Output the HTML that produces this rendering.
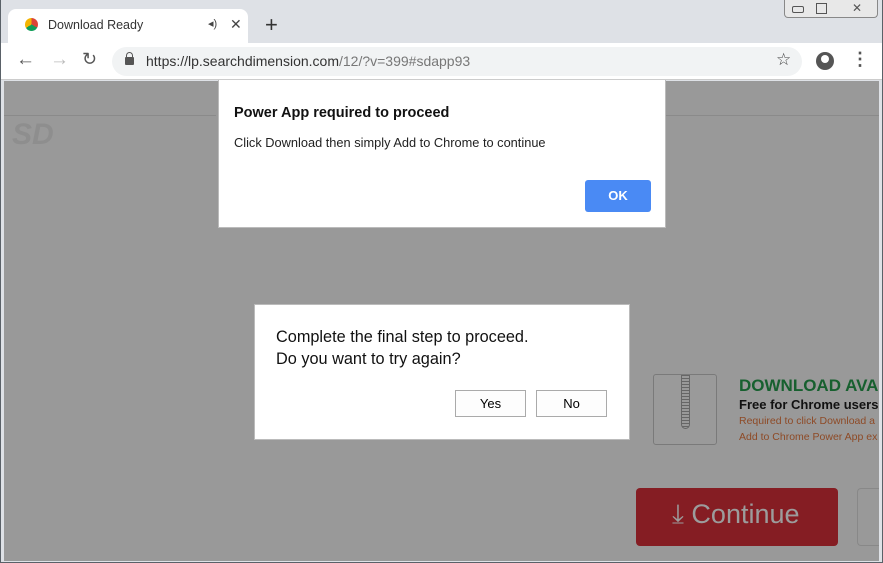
<!DOCTYPE html>
<html><head><style>
*{box-sizing:border-box;margin:0;padding:0}
body{width:883px;height:563px;overflow:hidden;font-family:"Liberation Sans",sans-serif;background:#dee1e6;position:relative}
.abs{position:absolute}
</style></head><body>
<div class="abs" style="left:0;top:0;width:883px;height:563px;border:1px solid #5a6168;border-top:none"></div>
<div class="abs" style="left:8px;top:9px;width:240px;height:34px;background:#fff;border-radius:8px 8px 0 0"></div>
<div class="abs" style="left:25px;top:18px;width:13px;height:13px;border-radius:50%;background:conic-gradient(#db4437 0 33%,#0f9d58 0 66%,#f4b400 0)"></div>
<div class="abs" style="left:48px;top:18px;font-size:12.5px;color:#333">Download Ready</div>
<div class="abs" style="left:208px;top:17px;font-size:11px;color:#444">◂)</div>
<div class="abs" style="left:230px;top:16px;font-size:14px;color:#444">✕</div>
<div class="abs" style="left:265px;top:12px;font-size:22px;color:#333">+</div>
<div class="abs" style="left:784px;top:0;width:94px;height:18px;border:1px solid #888;border-top:none;border-radius:0 0 4px 4px;background:#e8e8e8"></div>
<div class="abs" style="left:792px;top:6px;width:12px;height:7px;border:1px solid #555;border-radius:2px"></div>
<div class="abs" style="left:816px;top:3px;width:11px;height:11px;border:1px solid #555"></div>
<div class="abs" style="left:852px;top:1px;font-size:12px;color:#555">✕</div>
<div class="abs" style="left:1px;top:43px;width:881px;height:37px;background:#fff;border-bottom:1px solid #ccc"></div>
<div class="abs" style="left:16px;top:49px;font-size:19px;color:#555">←</div>
<div class="abs" style="left:50px;top:49px;font-size:19px;color:#bbb">→</div>
<div class="abs" style="left:82px;top:49px;font-size:18px;color:#555">↻</div>
<div class="abs" style="left:112px;top:47px;width:690px;height:29px;background:#f1f3f4;border-radius:15px"></div>
<div class="abs" style="left:125px;top:57px;width:9px;height:8px;background:#555;border-radius:1px"></div>
<div class="abs" style="left:126px;top:52px;width:7px;height:7px;border:1.5px solid #555;border-bottom:none;border-radius:4px 4px 0 0"></div>
<div class="abs" style="left:146px;top:53px;font-size:14px;color:#333">https://lp.searchdimension.com<span style="color:#777">/12/?v=399#sdapp93</span></div>
<div class="abs" style="left:776px;top:50px;font-size:17px;color:#444">☆</div>
<div class="abs" style="left:816px;top:52px;width:18px;height:18px;border-radius:50%;background:#555"></div>
<div class="abs" style="left:821px;top:55px;width:8px;height:8px;border-radius:50%;background:#fff"></div>
<div class="abs" style="left:851px;top:49px;font-size:18px;color:#555;font-weight:bold">⋮</div>
<div class="abs" style="left:4px;top:81px;width:875px;height:480px;background:#999"></div>
<div class="abs" style="left:4px;top:115px;width:212px;height:1px;background:#8a8a8a"></div>
<div class="abs" style="left:666px;top:115px;width:213px;height:1px;background:#8a8a8a"></div>
<div class="abs" style="left:12px;top:118px;font-size:30px;font-weight:bold;font-style:italic;color:#8e8e8e">SD</div>
<div class="abs" style="left:653px;top:374px;width:64px;height:71px;border:1px solid #7a7a7a;border-radius:3px;background:#9a9a9a"></div>
<div class="abs" style="left:681px;top:375px;width:9px;height:54px;border:1px solid #666;border-radius:0 0 5px 5px;background:repeating-linear-gradient(#999 0 2px,#666 2px 3px)"></div>
<div class="abs" style="left:739px;top:376px;font-size:17px;font-weight:bold;color:#17602f;white-space:nowrap">DOWNLOAD AVA</div>
<div class="abs" style="left:739px;top:397px;font-size:13px;font-weight:bold;color:#111;white-space:nowrap">Free for Chrome users</div>
<div class="abs" style="left:739px;top:415px;font-size:10.5px;color:#8e4a26;white-space:nowrap">Required to click Download a</div>
<div class="abs" style="left:739px;top:431px;font-size:10.5px;color:#8e4a26;white-space:nowrap">Add to Chrome Power App ex</div>
<div class="abs" style="left:636px;top:488px;width:202px;height:58px;background:#851d23;border-radius:4px"></div>
<div class="abs" style="left:672px;top:499px;font-size:27px;color:#9c9c9c;white-space:nowrap">⤓ Continue</div>
<div class="abs" style="left:857px;top:488px;width:22px;height:58px;border:1px solid #888;border-right:none;border-radius:4px 0 0 4px"></div>
<div class="abs" style="left:218px;top:80px;width:448px;height:148px;background:#fff;border:1px solid #bbb;border-top:none"></div>
<div class="abs" style="left:234px;top:105px;font-size:14.5px;font-weight:bold;color:#111">Power App required to proceed</div>
<div class="abs" style="left:234px;top:135px;font-size:12.8px;color:#222">Click Download then simply Add to Chrome to continue</div>
<div class="abs" style="left:585px;top:180px;width:66px;height:32px;background:#4a8af4;border-radius:3px;color:#fff;font-size:13px;font-weight:bold;text-align:center;line-height:32px">OK</div>
<div class="abs" style="left:254px;top:304px;width:376px;height:136px;background:#fff;border:1px solid #bbb"></div>
<div class="abs" style="left:276px;top:326px;font-size:16.3px;color:#111;line-height:22px">Complete the final step to proceed.<br>Do you want to try again?</div>
<div class="abs" style="left:455px;top:390px;width:71px;height:27px;border:1px solid #aaa;background:#fdfdfd;font-size:13px;text-align:center;line-height:25px">Yes</div>
<div class="abs" style="left:536px;top:390px;width:71px;height:27px;border:1px solid #aaa;background:#fdfdfd;font-size:13px;text-align:center;line-height:25px">No</div>
</body></html>
